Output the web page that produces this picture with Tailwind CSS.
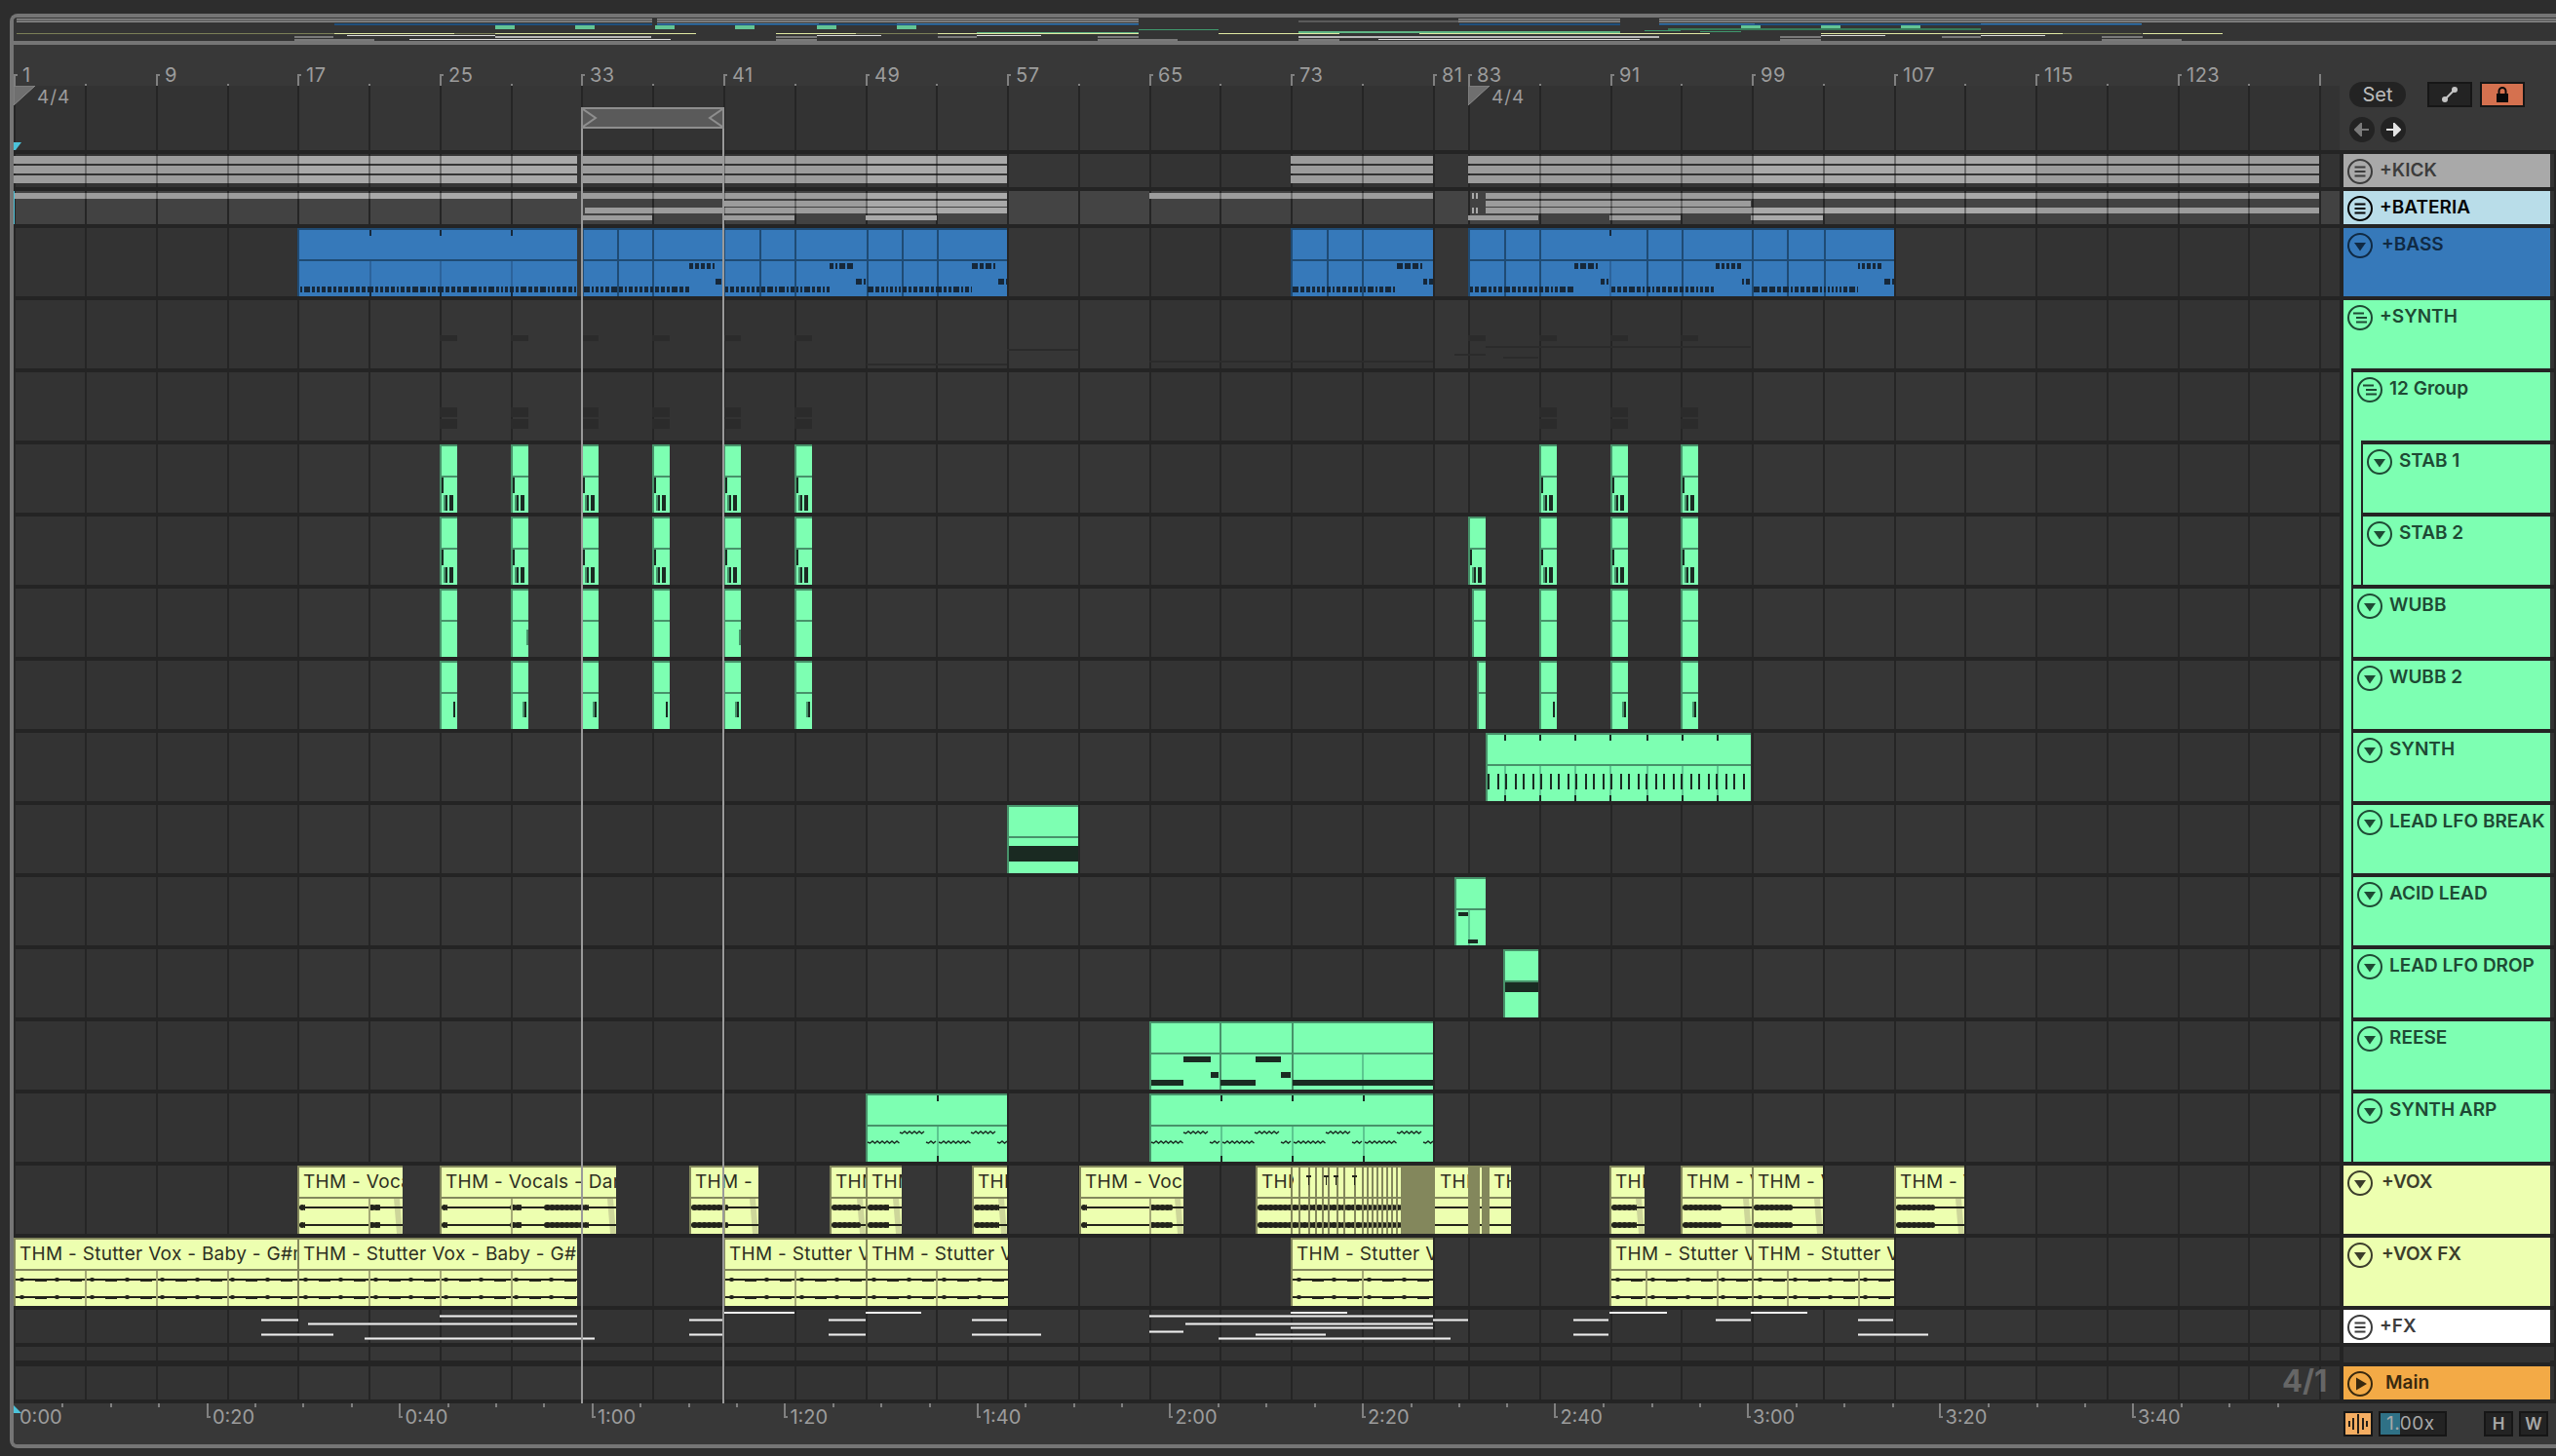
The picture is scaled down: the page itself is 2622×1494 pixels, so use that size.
<!DOCTYPE html>
<html lang="en">
<head>
    <meta charset="UTF-8">
    <title>Arrangement</title>
    <script src="https://cdn.jsdelivr.net/npm/@tailwindcss/browser@4"></script>
</head>
<body class="bg-[#2d2d2d] w-[2622px] h-[1494px] overflow-hidden [font-family:Inter,sans-serif]">
    <div class="pt-[14px] pl-[10px]">
        <div class="w-[2612px] h-[1472px] rounded-l-[8px] border-l-4 border-y-4 border-[#757575] overflow-hidden flex flex-col bg-[#383838]">
            <!-- overview strip -->
            <div id="overview" class="relative h-[24px] shrink-0 bg-[#343434] overflow-hidden"></div>
            <div class="h-[4px] shrink-0 bg-[#757575]"></div>

            <div id="main" class="relative flex-1 flex flex-col">
                <!-- ruler and set controls -->
                <div class="flex h-[108px] shrink-0">
                    <div class="w-[2386px] flex flex-col">
                        <div id="ruler" class="relative h-[42px] bg-[#383838]"></div>
                        <div id="sig" class="relative flex-1 bg-[#333333]"></div>
                    </div>
                    <div class="flex-1 pl-[10px] pt-[38px] bg-[#383838]">
                        <div class="flex items-start">
                            <div class="w-[58px] h-[26px] rounded-full bg-[#232323] text-[#bdbdbd] text-[20px] leading-[26px] text-center">Set</div>
                            <div class="ml-[22px] w-[46px] h-[26px] bg-[#232323] border-2 border-[#161616] flex items-center justify-center">
                                <svg width="18" height="18" viewBox="0 0 18 18"><path d="M4 14 L14 4" stroke="#c4c4c4" stroke-width="2"/><circle cx="4" cy="14" r="3" fill="#c4c4c4"/><circle cx="14" cy="4" r="3" fill="#c4c4c4"/></svg>
                            </div>
                            <div class="ml-[8px] w-[46px] h-[26px] bg-[#d5714f] border-2 border-[#161616] flex items-center justify-center">
                                <svg width="16" height="16" viewBox="0 0 16 16"><rect x="2" y="7" width="12" height="9" fill="#0a0a0a"/><path d="M4.5 7 V4.5 a3.5 3.5 0 0 1 7 0 V7" fill="none" stroke="#0a0a0a" stroke-width="2"/></svg>
                            </div>
                        </div>
                        <div class="flex gap-[6px] mt-[10px]">
                            <div class="w-[26px] h-[26px] rounded-full bg-[#232323] flex items-center justify-center">
                                <svg width="16" height="14" viewBox="0 0 16 14"><path d="M15 7 H5 M7 1 L1 7 L7 13 Z" stroke="#7a7a7a" stroke-width="2" fill="#7a7a7a"/></svg>
                            </div>
                            <div class="w-[26px] h-[26px] rounded-full bg-[#232323] flex items-center justify-center">
                                <svg width="16" height="14" viewBox="0 0 16 14"><path d="M1 7 H11 M9 1 L15 7 L9 13 Z" stroke="#e4e4e4" stroke-width="2" fill="#e4e4e4"/></svg>
                            </div>
                        </div>
                    </div>
                </div>
                <div class="h-[4px] shrink-0 bg-[#242424]"></div>

                <!-- tracks -->
                <div id="rows" class="shrink-0"></div>

                <!-- time ruler and bottom buttons -->
                <div class="flex h-[42px] shrink-0">
                    <div id="timeruler" class="relative w-[2386px] bg-[#383838]"></div>
                    <div class="flex-1 pl-[4px] pt-[8px] flex items-start">
                        <div class="w-[30px] h-[26px] bg-[#f4ad62] border-2 border-[#161616] flex items-center justify-center">
                            <svg width="22" height="20" viewBox="0 0 22 20"><path d="M2 7 V13 M6 4 V16 M11 0 V20 M16 4 V16 M20 7 V13" stroke="#111" stroke-width="1.8"/></svg>
                        </div>
                        <div class="relative ml-[6px] w-[70px] h-[26px] bg-[#232323] border-2 border-[#161616] overflow-hidden">
                            <div class="absolute left-0 top-0 bottom-0 w-[20px] bg-[#2f7186]"></div>
                            <div class="relative pl-[6px] text-[19px] leading-[22px] tracking-[0.5px] text-[#a8a8a8]">1.00x</div>
                        </div>
                        <div class="ml-[38px] w-[30px] h-[26px] bg-[#232323] border-2 border-[#161616] text-[17px] leading-[22px] font-semibold text-center text-[#a8a8a8]">H</div>
                        <div class="ml-[6px] w-[30px] h-[26px] bg-[#232323] border-2 border-[#161616] text-[17px] leading-[22px] font-semibold text-center text-[#a8a8a8]">W</div>
                    </div>
                </div>

                <!-- loop brace and its guide lines lie over the clips -->
                <div class="absolute left-[582px] top-[64px] w-[147px] h-[22px] bg-[#5a5a5a] border-2 border-[#8e8e8e] z-30">
                    <svg class="absolute left-0 top-0" width="143" height="18" viewBox="0 0 143 18"><path d="M0 0 L13 9 L0 18 M143 0 L130 9 L143 18" fill="none" stroke="#8e8e8e" stroke-width="2"/></svg>
                </div>
                <div class="absolute left-[582px] top-[86px] w-[2px] h-[1308px] bg-[#9a9a9a] z-30"></div>
                <div class="absolute left-[727px] top-[86px] w-[2px] h-[1308px] bg-[#9a9a9a] z-30"></div>
            </div>
        </div>
    </div>

    <script>
        const X = bar => 14.4 + (bar - 1) * 18.19;
        const LANE = 14; // screen x where the lanes start

        function el(parent, cls, x, y, w, h, text) {
            const d = document.createElement('div');
            d.className = 'absolute ' + cls;
            d.style.left = x + 'px';
            d.style.top = y + 'px';
            if (w != null) d.style.width = w + 'px';
            if (h != null) d.style.height = h + 'px';
            if (text) d.textContent = text;
            parent.appendChild(d);
            return d;
        }

        // small repeatable random, so that note patterns stay the same between runs
        let seed = 7;
        const rnd = () => (seed = (seed * 16807) % 2147483647) / 2147483647;

        const ICONS = {
            menu: '<path d="M7.5 8.5H18.5M7.5 13H18.5M7.5 17.5H18.5" stroke="currentColor" stroke-width="2"/>',
            stair: '<path d="M6 8.5H17M9 13H20M9 17.5H20" stroke="currentColor" stroke-width="2"/>',
            down: '<path d="M7 10H19L13 18.5Z" fill="currentColor"/>',
            play: '<path d="M9 6.5L20 13L9 19.5Z" fill="currentColor"/>'
        };

        const GREEN = 'bg-[#7dffb2]', GT = 'text-[#1e4a34]';
        const tracks = [
            { name: '+KICK', h: 34, bg: 'bg-[#a9a9a9]', text: 'text-[#3c3c3c]', icon: 'menu', gap: 'ml-[7px]', lane: '' },
            { name: '+BATERIA', h: 34, bg: 'bg-[#b9dde9]', text: 'text-[#050505]', icon: 'menu', gap: 'ml-[7px]', lane: 'bg-[#424242]' },
            { name: '+BASS', h: 70, bg: 'bg-[#3679ba]', text: 'text-[#102a44]', icon: 'down', gap: 'ml-[9px]' },
            { name: '+SYNTH', h: 70, bg: GREEN, text: GT, icon: 'stair', gap: 'ml-[7px]', depth: 0, sepLevel: 0, sepMl: 'ml-2' },
            { name: '12 Group', h: 70, bg: GREEN, text: GT, icon: 'stair', gap: 'ml-[7px]', depth: 1, sepLevel: 1, sepMl: 'ml-2' },
            { name: 'STAB 1', h: 70, bg: GREEN, text: GT, icon: 'down', gap: 'ml-[7px]', depth: 2, sepLevel: 2 },
            { name: 'STAB 2', h: 70, bg: GREEN, text: GT, icon: 'down', gap: 'ml-[7px]', depth: 2, sepLevel: 1 },
            { name: 'WUBB', h: 70, bg: GREEN, text: GT, icon: 'down', gap: 'ml-[7px]', depth: 1, sepLevel: 1 },
            { name: 'WUBB 2', h: 70, bg: GREEN, text: GT, icon: 'down', gap: 'ml-[7px]', depth: 1, sepLevel: 1 },
            { name: 'SYNTH', h: 70, bg: GREEN, text: GT, icon: 'down', gap: 'ml-[7px]', depth: 1, sepLevel: 1 },
            { name: 'LEAD LFO BREAK', h: 70, bg: GREEN, text: GT, icon: 'down', gap: 'ml-[7px]', depth: 1, sepLevel: 1 },
            { name: 'ACID LEAD', h: 70, bg: GREEN, text: GT, icon: 'down', gap: 'ml-[7px]', depth: 1, sepLevel: 1 },
            { name: 'LEAD LFO DROP', h: 70, bg: GREEN, text: GT, icon: 'down', gap: 'ml-[7px]', depth: 1, sepLevel: 1 },
            { name: 'REESE', h: 70, bg: GREEN, text: GT, icon: 'down', gap: 'ml-[7px]', depth: 1, sepLevel: 1 },
            { name: 'SYNTH ARP', h: 70, bg: GREEN, text: GT, icon: 'down', gap: 'ml-[7px]', depth: 1, sepLevel: 0 },
            { name: '+VOX', h: 70, bg: 'bg-[#edffb0]', text: 'text-[#3c3e2b]', icon: 'down', gap: 'ml-[9px]' },
            { name: '+VOX FX', h: 70, bg: 'bg-[#edffb0]', text: 'text-[#3c3e2b]', icon: 'down', gap: 'ml-[9px]' },
            { name: '+FX', h: 34, bg: 'bg-[#ffffff]', text: 'text-[#3c3c3c]', icon: 'menu', gap: 'ml-[7px]' },
            { name: '', h: 14, sep: 'h-[6px]', bg: 'bg-[#333333]' },
            { name: 'Main', h: 34, bg: 'bg-[#f3aa46]', text: 'text-[#38290f]', icon: 'play', gap: 'ml-[13px]' }
        ];

        function headerHtml(t) {
            const depth = t.depth || 0, sepLevel = t.sepLevel || 0;
            const content = !t.name ? '<div class="flex-1"></div>' :
                `<div class="flex items-center h-[26px] mt-[5px] ml-[4px] ${t.text} text-[19px] font-semibold whitespace-nowrap">
                    <svg width="26" height="26" viewBox="0 0 26 26" class="shrink-0"><circle cx="13" cy="13" r="12" fill="none" stroke="currentColor" stroke-width="2"/>${ICONS[t.icon]}</svg>
                    <span class="relative top-[-1px] ${t.gap}">${t.name}</span>
                </div><div class="flex-1"></div>`;
            const build = level => {
                const body = level === depth ? content : build(level + 1);
                const sep = level === sepLevel ? `<div class="h-[4px] shrink-0 bg-[#242424] ${t.sepMl || ''}"></div>` : '';
                const cls = level > 0 ? 'ml-2 border-l-2 border-[#242424] flex-1 flex flex-col min-h-0' : 'h-full flex flex-col';
                return `<div class="${cls}">${body}${sep}</div>`;
            };
            return build(0);
        }

        const rowsEl = document.getElementById('rows');
        const lanes = tracks.map(t => {
            const sepH = t.sep === 'h-[6px]' ? 6 : 4;
            const row = document.createElement('div');
            row.className = 'flex';
            row.style.height = (t.h + sepH) + 'px';
            row.innerHTML = `<div class="w-[2386px] flex flex-col shrink-0">
                    <div class="relative flex-1 bg-[#333333] ${t.lane || ''}" data-lane></div>
                    <div class="shrink-0 bg-[#242424] ${sepH === 6 ? 'h-[6px]' : 'h-[4px]'}"></div>
                </div>
                <div class="w-[4px] shrink-0 bg-[#242424]"></div>
                <div class="w-[212px] shrink-0 ${t.bg}">${headerHtml(t)}</div>
                <div class="w-[4px] shrink-0 flex flex-col"><div class="flex-1 bg-[#333333]"></div><div class="shrink-0 bg-[#242424] ${sepH === 6 ? 'h-[6px]' : 'h-[4px]'}"></div></div>
                <div class="w-[2px] shrink-0 bg-[#242424]"></div>`;
            rowsEl.appendChild(row);
            return row.querySelector('[data-lane]');
        });
        const [KICK, BAT, BASS, SYN, GRP, STAB1, STAB2, WUBB, WUBB2, SYNTH, BREAK, ACID, DROP, REESE, ARP, VOX, VOXFX, FX, EMPTY, MAIN] = lanes;

        // zebra bands and grid lines behind every lane
        const LIGHT = [[17, 33], [49, 65], [81, 83], [99, 115]];
        const gridBars = [];
        for (let b = 1; b <= 81; b += 4) gridBars.push(b);
        for (let b = 83; b <= 131; b += 4) gridBars.push(b);
        const sig = document.getElementById('sig');
        lanes.concat(sig).forEach(lane => {
            LIGHT.forEach(([a, b]) => el(lane, 'bg-white/[0.015]', X(a) - LANE, 0, X(b) - X(a), null).style.bottom = '0');
            gridBars.forEach(b => el(lane, 'bg-[#252525]', Math.round(X(b)) - LANE, 0, 2, null).style.bottom = '0');
        });

        // top ruler
        const ruler = document.getElementById('ruler');
        [1, 9, 17, 25, 33, 41, 49, 57, 65, 73, 81, 83, 91, 99, 107, 115, 123].forEach(b => {
            const x = Math.round(X(b)) - LANE;
            el(ruler, 'bg-[#808080]', x, 30, 2, 12);
            el(ruler, 'bg-[#808080]', x, 30, 4, 2);
            el(ruler, 'text-[20px] leading-[20px] tracking-[0.5px] text-[#9c9c9c]', x + 9, 21, null, null, String(b));
        });
        gridBars.filter(b => (b - 1) % 8 && b !== 83).forEach(b => {
            el(ruler, 'bg-[#808080]', Math.round(X(b)) - LANE, 40, 2, 2);
        });
        el(ruler, 'bg-[#808080]', 2379 - LANE, 30, 2, 12);

        // time signature flags and the cyan start marker
        [[0, 1], [1492, 83]].forEach(([x]) => {
            const s = document.createElementNS('http://www.w3.org/2000/svg', 'svg');
            s.setAttribute('width', 24); s.setAttribute('height', 22);
            s.setAttribute('class', 'absolute top-0');
            s.style.left = x + 'px';
            s.innerHTML = '<path d="M0 0H22L0 20Z" fill="#6f6f6f" stroke="#8c8c8c" stroke-width="1"/>';
            sig.appendChild(s);
            el(sig, 'text-[19px] leading-[20px] text-[#9c9c9c] tracking-[1px]', x + 24, 2, null, null, '4/4');
        });
        const flag = el(sig, '', 0, 58, 8, 8);
        flag.innerHTML = '<svg width="8" height="8" viewBox="0 0 8 8" class="block"><path d="M0 0H8L2 8H0Z" fill="#4cc3da"/></svg>';

        // kick and bateria summaries: darker in every other 16 bars, grid lines show through
        const DARK = [[1, 17], [33, 49], [65, 81], [83, 99], [115, 131]];
        function bars(lane, segs, y, h) {
            segs.forEach(([a, b]) => {
                el(lane, 'bg-[#a9a9a9]', a - LANE, y, b - a, h);
                DARK.forEach(([p, q]) => {
                    const l = Math.max(a, X(p)), r = Math.min(b, X(q));
                    if (r > l) el(lane, 'bg-[#9c9c9c]', l - LANE, y, r - l, h);
                });
                gridBars.forEach(g => {
                    const x = Math.round(X(g));
                    if (x > a && x < b - 1) el(lane, 'bg-[#6e6e6e]', x - LANE, y, 2, h);
                });
            });
        }
        const K = [[14, 592], [597, 1033], [1324, 1470], [1506, 2379]];
        bars(KICK, K, 2, 8); bars(KICK, K, 12, 8); bars(KICK, K, 22, 8);
        bars(BAT, [[14, 592], [597, 1033], [1179, 1470], [1524, 2379]], 2, 6);
        bars(BAT, [[742, 1033], [1524, 1796]], 10, 6);
        bars(BAT, [[600, 1033], [1524, 2379]], 17, 6);
        bars(BAT, [[597, 669], [742, 815], [888, 961], [1506, 1578], [1651, 1724], [1796, 1870]], 25, 5);
        [1510, 1514].forEach(x => { el(BAT, 'bg-[#a9a9a9]', x - LANE, 2, 2, 6); el(BAT, 'bg-[#a9a9a9]', x - LANE, 17, 2, 6); });
        el(BAT, 'bg-[#4cc3da]', 0, 0, 1, 34);

        const THEME = {
            green: { bg: 'bg-[#7dffb2]', line: 'bg-[#47926a]', soft: 'bg-[#5cc790]', note: 'bg-[#1a2a22]', text: '' },
            blue: { bg: 'bg-[#3679ba]', line: 'bg-[#1f4b74]', soft: 'bg-[#2c639b]', note: 'bg-[#16283a]', text: '' },
            yellow: { bg: 'bg-[#edffb0]', line: 'bg-[#83875c]', soft: 'bg-[#a4a976]', note: 'bg-[#23241b]', text: 'text-[#2e2f22]' }
        };

        // a clip; child helpers take screen x and y inside the lane
        function clip(lane, l, r, name, label) {
            const th = THEME[name], node = el(lane, th.bg + ' overflow-hidden z-10', l - LANE, 0, r - l, 70);
            const c = {
                th, l, r,
                add: (cls, x, y, w, h, t) => el(node, cls, x - l, y, w, h, t),
                full: x => c.add(th.line, x, 2, 2, 68),
                body: x => c.add(th.soft, x, 34, 2, 36),
                ticks: x => { c.add(th.note, x, 2, 2, 6); c.add(th.note, x, 64, 2, 6); c.add(th.soft, x, 34, 2, 30); },
                node
            };
            if (label) c.add('text-[19px] tracking-[0.3px] leading-[30px] whitespace-nowrap ' + th.text, l + 6, 2, null, 30, label);
            c.add(th.line, l, 32, r - l, 2);
            c.add(th.line, l, 0, r - l, 2);
            c.add(th.line, l, 0, 2, 70);
            return c;
        }

        function dashes(c, x0, x1, y, h) {
            let x = x0;
            while (x < x1) {
                const w = Math.min([2, 3, 4, 4, 6][Math.floor(rnd() * 5)], x1 - x);
                c.add(c.th.note, x, y, w, h);
                x += w + 2;
            }
        }

        function bassBlock(c, s) {
            dashes(c, s + 2, s + 109, 60, 6);
            dashes(c, s + 109, s + 135, 36, 6);
            dashes(c, s + 136, s + 146, 52, 6);
        }

        // bass
        const b1 = clip(BASS, 305, 592, 'blue');
        [379, 451, 524].forEach(b1.ticks);
        dashes(b1, 308, 592, 60, 6);
        const b2 = clip(BASS, 597, 1033, 'blue');
        [633, 669, 742, 779, 815, 889, 925, 961].forEach(b2.full);
        dashes(b2, 599, 597 + 110, 60, 6); dashes(b2, 707, 733, 36, 6); dashes(b2, 734, 742, 52, 6);
        bassBlock(b2, 742); bassBlock(b2, 888);
        const b3 = clip(BASS, 1324, 1470, 'blue');
        [1361, 1397].forEach(b3.full);
        bassBlock(b3, 1324);
        const b4 = clip(BASS, 1506, 1943, 'blue');
        [1543, 1579, 1689, 1725, 1797, 1833, 1871].forEach(b4.full);
        b4.add(b4.th.note, 1651, 2, 2, 6); b4.body(1651);
        [1506, 1651, 1797].forEach(s => bassBlock(b4, s));

        // faint summaries in the group lanes
        [25, 29, 33, 37, 41, 45, 87, 91, 95].forEach(b => {
            el(SYN, 'bg-[#2b2b2b]', X(b) - LANE, 36, 18, 6);
            el(GRP, 'bg-[#2b2b2b]', X(b) - LANE, 36, 18, 10);
            el(GRP, 'bg-[#2b2b2b]', X(b) - LANE, 48, 18, 10);
        });
        [[1033, 1106, 50], [889, 1033, 65], [1179, 1470, 62], [1524, 1796, 47], [1492, 1524, 55], [1542, 1578, 58]].forEach(([a, b, y]) => el(SYN, 'bg-[#2b2b2b]', a - LANE, y, b - a, 2));
        el(SYN, 'bg-[#2b2b2b]', 1506 - LANE, 36, 18, 6);

        // short stabs
        function stab(lane, x, w, kind, i) {
            const c = clip(lane, x, x + w, 'green');
            if (kind === 'notes') {
                c.add(c.th.note, x + 2, 34, 2, 16);
                c.add(c.th.line, x + 4, 52, 2, 16);
                c.add(c.th.note, x + 6, 52, 2, 16);
                c.add(c.th.note, x + 10, 52, i % 2 ? 4 : 2, 16);
                c.add(c.th.note, x + 12, 52, 2, 16);
            }
            if (kind === 'slim') c.add(c.th.line, x + w - 2, 42, 2, 16);
            if (kind === 'tick') {
                if (i % 3) c.add(c.th.line, x + 12, 42, 2, 16);
                c.add(c.th.note, x + 14, 42, 2, 16);
            }
        }
        [25, 29, 33, 37, 41, 45, 87, 91, 95].forEach((b, i) => {
            const x = Math.round(X(b));
            stab(STAB1, x, 18, 'notes', i);
            stab(STAB2, x, 18, 'notes', i);
            stab(WUBB, x, 18, i === 1 || i === 4 ? 'slim' : '', i);
            stab(WUBB2, x, 18, 'tick', i);
        });
        stab(STAB2, 1506, 18, 'notes', 0);
        stab(WUBB, 1510, 14, '', 0);
        stab(WUBB2, 1515, 9, '', 0);

        // synth
        const s1 = clip(SYNTH, 1524, 1796, 'green');
        [1543, 1579, 1615, 1651, 1689, 1725, 1761].forEach(s1.ticks);
        for (let x = 1526, i = 0; x < 1794; x += i++ % 2 ? 8 : 10) s1.add(s1.th.note, x, 42, 2, 16);

        // leads
        const br = clip(BREAK, 1033, 1106, 'green');
        br.add(br.th.note, 1035, 42, 71, 16);
        const ac = clip(ACID, 1492, 1524, 'green');
        ac.add(ac.th.soft, 1506, 34, 2, 36);
        ac.add(ac.th.note, 1496, 36, 10, 4);
        ac.add(ac.th.note, 1506, 64, 10, 4);
        const dr = clip(DROP, 1542, 1578, 'green');
        dr.add(dr.th.note, 1544, 34, 34, 10);

        // reese
        const re = clip(REESE, 1179, 1470, 'green');
        [1251, 1325].forEach(re.full);
        re.body(1397);
        [[1214, 1242, 36], [1288, 1314, 36], [1242, 1250, 52], [1314, 1324, 52], [1181, 1214, 60], [1252, 1288, 60], [1326, 1470, 60]].forEach(([a, b, y]) => re.add(re.th.note, a, y, b - a, 6));

        // arp, drawn as small zigzags
        function zig(c, a, b, y) {
            let d = `M${a - c.l} ${y + 2}`;
            for (let x = a + 2.5, up = 0; x <= b; x += 2.5, up = !up) d += `L${x - c.l} ${y + (up ? 1 : 3)}`;
            return `<path d="${d}" fill="none" stroke="#1a2a22" stroke-width="1.4"/>`;
        }
        function arp(l, r) {
            const c = clip(ARP, l, r, 'green');
            let paths = '';
            for (let s = l; s < r; s += 73) {
                paths += zig(c, s + 2, Math.min(s + 35, r), 48);
                paths += zig(c, s + 35, Math.min(s + 62, r), 38);
                paths += zig(c, s + 62, Math.min(s + 73, r), 48);
            }
            const w = r - l;
            const holder = c.add('', l, 0, w, 70);
            holder.innerHTML = `<svg width="${w}" height="70" class="block">${paths}</svg>`;
            for (let s = l + 73; s < r; s += 73) c.ticks(s);
            return c;
        }
        arp(1179, 1470);
        arp(888, 1033);

        // audio clips
        function wave(c, y, blobs, big) {
            c.add(c.th.note, c.l + 2, y - 1, c.r - c.l - 2, 2);
            blobs.forEach(([x, w]) => {
                for (let i = x; i < x + w; i += 5) c.add(c.th.note + ' rounded-full', i, y - 3, Math.min(7, x + w - i), big);
            });
        }
        function voxClip(l, r, label, blobs) {
            const c = clip(VOX, l, r, 'yellow', label);
            const wedge = c.add('', r - 9, 34, 9, 36);
            wedge.innerHTML = '<svg width="9" height="36" class="block"><path d="M0 0H6L9 36H3Z" fill="#cdd69a"/></svg>';
            wave(c, 43, blobs, 6); wave(c, 61, blobs, 6);
            for (let b = 1; b <= 131; b += 4) { const x = Math.round(X(b)); if (x > l + 4 && x < r - 2 && gridBars.includes(b)) c.add(c.th.soft, x, 34, 2, 36); }
            return c;
        }
        voxClip(305, 413, 'THM - Vocals - Dance', [[307, 6], [378, 12]]);
        voxClip(451, 632, 'THM - Vocals - Dance', [[453, 6], [523, 12], [558, 46]]);
        voxClip(707, 778, 'THM - Vocals - Dance', [[709, 38]]);
        voxClip(851, 888, 'THM - Vocals', [[853, 30]]);
        voxClip(888, 925, 'THM - Vocals', [[890, 22]]);
        voxClip(997, 1033, 'THM - Vocals', [[999, 26]]);
        voxClip(1107, 1214, 'THM - Vocals - Dance', [[1109, 6], [1179, 24]]);
        voxClip(1651, 1687, 'THM - Vocals', [[1653, 26]]);
        voxClip(1724, 1797, 'THM - Vocals - Dance', [[1726, 40]]);
        voxClip(1797, 1870, 'THM - Vocals - Dance', [[1799, 40]]);
        voxClip(1943, 2015, 'THM - Vocals - Dance', [[1945, 40]]);

        // the chopped up stretch around bar 73
        const ch = clip(VOX, 1288, 1526, 'yellow', 'THM');
        wave(ch, 43, [[1290, 180]], 6); wave(ch, 61, [[1290, 180]], 6);
        ch.add(ch.th.bg, 1327, 2, 10, 30);
        [522, 547, 577, 597, 617, 637, 663, 685, 717, 742, 757, 770, 785, 800, 815, 830, 845, 860, 908, 955].forEach(z => {
            ch.add(ch.th.line, Math.round(z / 3 + 1150), 0, 2, 70);
        });
        [1340, 1358, 1368, 1387].forEach(x => {
            ch.add(ch.th.note, x, 10, 5, 2);
            ch.add(ch.th.note, x + 2, 10, 1, 10);
        });
        ch.add(ch.th.line, 1438, 0, 15, 70);
        ch.add(ch.th.line, 1454, 0, 14, 70);
        ch.add(ch.th.bg, 1472, 2, 34, 30);
        ch.add(ch.th.text + ' text-[19px] tracking-[0.3px] leading-[30px] whitespace-nowrap overflow-hidden', 1477, 2, 29, 30, 'THM');
        ch.add(ch.th.line, 1506, 0, 12, 70);
        ch.add(ch.th.line, 1520, 0, 6, 70);
        const ch2 = clip(VOX, 1526, 1550, 'yellow', 'THM');
        ch2.add(ch2.th.note, 1528, 42, 22, 2);
        ch2.add(ch2.th.note, 1528, 60, 22, 2);
        ch.add(ch.th.line, 1470, 0, 2, 70);

        function fxClip(l, r, label) {
            const c = clip(VOXFX, l, r, 'yellow', label);
            [43, 61].forEach(y => {
                c.add(c.th.note, l + 2, y - 1, r - l - 2, 2);
                for (let x = l + 6; x < r - 4; x += 36) {
                    c.add(c.th.note + ' rounded-full', x, y - 2, 5, 4);
                    c.add(c.th.note, x + 16, y - 1.5, 12, 3);
                }
            });
            for (let b = 1; b <= 131; b += 4) { const x = Math.round(X(b)); if (x > l + 4 && x < r - 2) c.add(c.th.soft, x, 34, 2, 36); }
            return c;
        }
        fxClip(14, 305, 'THM - Stutter Vox - Baby - G#m');
        fxClip(305, 592, 'THM - Stutter Vox - Baby - G#m');
        [742, 888, 1324, 1651, 1797].forEach(x => fxClip(x, x + 146, 'THM - Stutter Vox - Baby'));

        // fx lane, one thin note per line
        const FXY = 1344;
        [[1347, [[742, 815], [888, 945], [1324, 1382], [1651, 1710], [1796, 1854]], 1],
         [1350, [[451, 592], [1179, 1470]]],
         [1354, [[268, 306], [707, 742], [850, 888], [997, 1033], [1470, 1506], [1614, 1650], [1760, 1796], [1906, 1942]]],
         [1358, [[316, 592], [1216, 1470]]],
         [1362, [[1324, 1470]]],
         [1366, [[1179, 1214]]],
         [1369, [[268, 342], [707, 742], [850, 888], [997, 1068], [1288, 1360], [1614, 1650], [1906, 1978]]],
         [1373, [[374, 610], [1250, 1488]]]
        ].forEach(([y, segs, bright]) => segs.forEach(([a, b]) => {
            if (bright) el(FX, 'bg-[#eeeeee]', a - LANE, y - FXY - 1, b - a, 2);
            else el(FX, 'bg-[linear-gradient(#707070,#eeeeee,#707070)]', a - LANE, y - FXY - 1, b - a, 3);
        }));

        el(MAIN, 'text-[31px] leading-[30px] font-bold text-[#666666] z-10', 2327, 0, null, null, '4/1');

        // time ruler
        const tr = document.getElementById('timeruler');
        for (let i = 1; i < 48; i++) {
            const x = 49.4 * i;
            if (i % 4 && x < 2380) el(tr, 'bg-[#808080]', x, 0, 2, 4);
        }
        ['0:00', '0:20', '0:40', '1:00', '1:20', '1:40', '2:00', '2:20', '2:40', '3:00', '3:20', '3:40'].forEach((t, i) => {
            const x = 0.4 + 197.5 * i;
            if (i) { el(tr, 'bg-[#808080]', x, 0, 2, 15); el(tr, 'bg-[#808080]', x, 13, 4, 2); }
            el(tr, 'text-[20px] leading-[20px] text-[#9c9c9c]', i ? x + 6 : 6, 4, null, null, t);
        });
        const mark = el(tr, '', 0, 2, 8, 8);
        mark.innerHTML = '<svg width="8" height="8" viewBox="0 0 8 8" class="block"><path d="M0 0L8 8H0Z" fill="#4cc3da"/></svg>';

        // overview strip
        const ov = document.getElementById('overview');
        const OY = 18;
        const oRect = (a, b, y, h, cls) => el(ov, cls, a - LANE, y - OY, b - a, h);
        [[17, 669], [674, 1168], [1496, 1662], [1702, 2622]].forEach(([a, b]) => {
            oRect(a, b, 19, 4, 'bg-[#666666] border-y border-[#8c8c8c]');
        });
        oRect(1332, 1496, 21, 2, 'bg-[#5a5a5a]');
        [[343, 669], [674, 1168], [1497, 1662], [1702, 2197]].forEach(([a, b]) => oRect(a, b, 24, 2, 'bg-[#1f4f7c]'));
        [[674, 840], [920, 1168], [1702, 1800], [2032, 2197]].forEach(([a, b]) => oRect(a, b, 24, 1, 'bg-[#3e7fb8]'));
        [508, 590, 672, 754, 838, 920, 1786, 1868, 1950].forEach(x => oRect(x, x + 20, 26, 4, 'bg-[#62c494]'));
        oRect(1168, 1250, 30, 1, 'bg-[#3f9a6e]');
        oRect(1711, 2032, 29, 2, 'bg-[#367a58]');
        oRect(1687, 1724, 31, 1, 'bg-[#3f9a6e]');
        oRect(1744, 1786, 32, 1, 'bg-[#3f9a6e]');
        oRect(1002, 1168, 33, 1, 'bg-[#5fb585]');
        oRect(1332, 1662, 32, 2, 'bg-[#5fb585]');
        [[17, 343], [466, 508], [878, 962], [2116, 2197]].forEach(([a, b]) => oRect(a, b, 34, 1, 'bg-[#7b7f57]'));
        [[343, 466], [508, 714], [796, 878], [962, 1168], [1250, 1374], [1456, 1754], [1868, 2116], [2198, 2280]].forEach(([a, b]) => oRect(a, b, 34, 1, 'bg-[#dfe8a2]'));
        [[302, 342], [796, 838], [962, 1002], [1126, 1168], [1826, 1868], [1992, 2032], [2156, 2198]].forEach(([a, b]) => oRect(a, b, 37, 2, 'bg-[#7a7a7a]'));
        [[508, 668], [1332, 1702]].forEach(([a, b]) => oRect(a, b, 37, 2, 'bg-[#b8b8b8]'));
        [[356, 508], [838, 904], [1002, 1068], [1868, 1934], [2032, 2098]].forEach(([a, b]) => oRect(a, b, 36, 1, 'bg-[#dddddd]'));
        [[302, 384], [796, 838], [1126, 1208], [1332, 1374], [1826, 1868], [2156, 2238]].forEach(([a, b]) => oRect(a, b, 40, 2, 'bg-[#7a7a7a]'));
        [[420, 688], [1414, 1682]].forEach(([a, b]) => oRect(a, b, 40, 1, 'bg-[#dddddd]'));
    </script>
</body>
</html>
